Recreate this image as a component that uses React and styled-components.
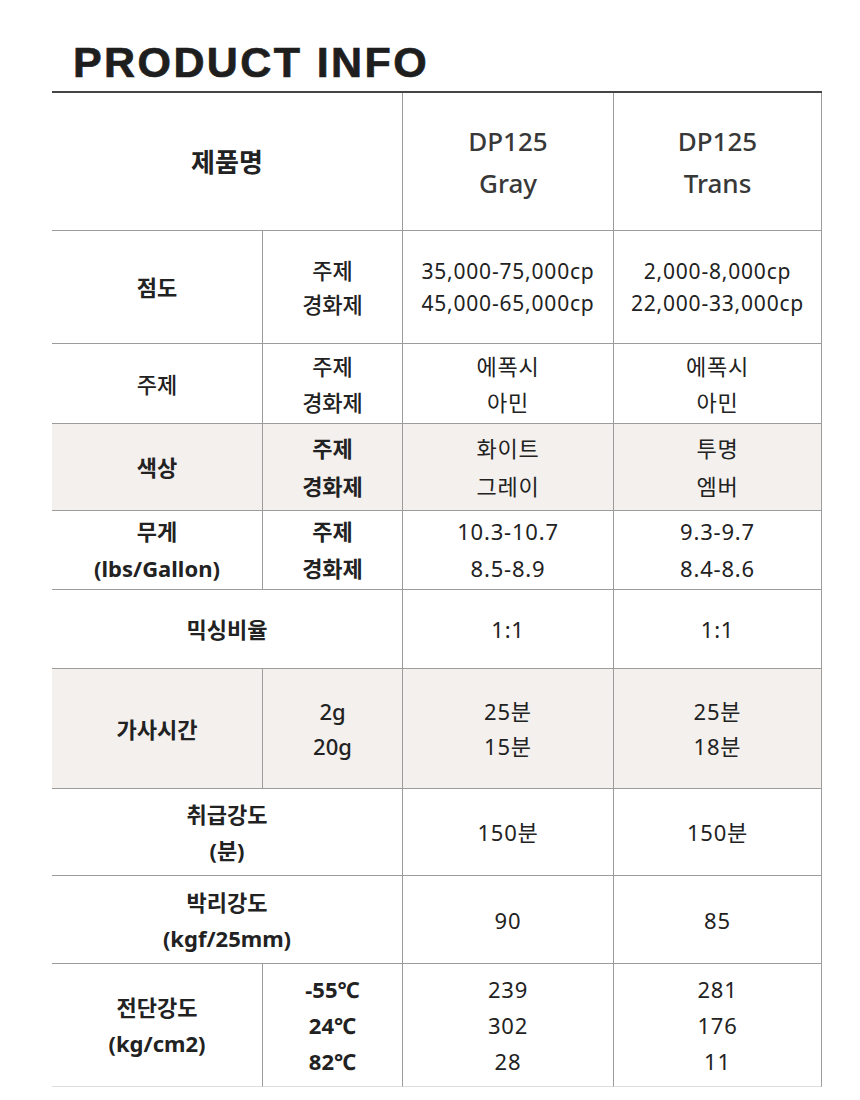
import React from 'react'
import styled, { createGlobalStyle } from 'styled-components'

const GlobalStyle = createGlobalStyle`
  body{
    margin: 0;
    background: #fff;
    font-family: "Noto Sans", "Noto Sans CJK KR", sans-serif;
    color: #222;
  }
`

const Page = styled.main`
  width: 860px;
  padding-top: 41px;
`

const Title = styled.h1`
  margin: 0 0 7px 73px;
  font-family: "Liberation Sans", Arial, sans-serif;
  font-weight: 700;
  font-size: 43px;
  line-height: 43px;
  letter-spacing: 2.4px;
  color: #1e1e1e;
  -webkit-text-stroke: 0.7px #1e1e1e;
`

const Grid = styled.div`
  margin-left: 52px;
  width: 770px;
  border-top: 2px solid #454545;
  display: grid;
  grid-template-columns: 211px 140px 211px 208px;
  grid-template-rows: 138px 113px 80px 87px 79px 79px 120px 87px 88px 123px;
`

const Cell = styled.div`
  box-sizing: border-box;
  grid-column: span ${p => p.$span || 1};
  border-right: 1px solid #9c9c9c;
  border-bottom: 1px solid ${p => (p.$last ? '#dedede' : '#9c9c9c')};
  background: ${p => (p.$shaded ? '#f3f0ee' : '#fff')};
  display: flex;
  flex-direction: column;
  align-items: center;
  justify-content: center;
  text-align: center;
  font-size: ${p => p.$size || 22}px;
  line-height: ${p => p.$lh || 36}px;
  font-weight: ${p => p.$weight || 400};
  letter-spacing: ${p => (p.$weight ? 0 : 0.8)}px;
  color: #222;
`

const HeadCell = styled(Cell)`
  font-size: 26px;
  line-height: 42px;
  letter-spacing: 0;
  font-weight: ${p => p.$weight || 500};
  color: ${p => (p.$weight ? '#222' : '#383838')};
`

const Line = ({ items }) => items.map((t, i) => <span key={i}>{t}</span>)

const App = () => {
  return (
    <Page>
      <GlobalStyle />
      <Title>PRODUCT INFO</Title>
      <Grid>
        {/* header */}
        <HeadCell $span={2} $weight={700}>제품명</HeadCell>
        <HeadCell><Line items={['DP125', 'Gray']} /></HeadCell>
        <HeadCell><Line items={['DP125', 'Trans']} /></HeadCell>

        {/* 점도 */}
        <Cell $weight={700}>점도</Cell>
        <Cell $weight={500} $lh={34}><Line items={['주제', '경화제']} /></Cell>
        <Cell $lh={32} $size={21}><Line items={['35,000-75,000cp', '45,000-65,000cp']} /></Cell>
        <Cell $lh={32} $size={21}><Line items={['2,000-8,000cp', '22,000-33,000cp']} /></Cell>

        {/* 주제 */}
        <Cell $weight={500}>주제</Cell>
        <Cell $weight={500}><Line items={['주제', '경화제']} /></Cell>
        <Cell><Line items={['에폭시', '아민']} /></Cell>
        <Cell><Line items={['에폭시', '아민']} /></Cell>

        {/* 색상 */}
        <Cell $shaded $weight={700}>색상</Cell>
        <Cell $shaded $weight={700} $lh={38}><Line items={['주제', '경화제']} /></Cell>
        <Cell $shaded $lh={38}><Line items={['화이트', '그레이']} /></Cell>
        <Cell $shaded $lh={38}><Line items={['투명', '엠버']} /></Cell>

        {/* 무게 */}
        <Cell $weight={700} $lh={37}><Line items={['무게', '(lbs/Gallon)']} /></Cell>
        <Cell $weight={700} $lh={37}><Line items={['주제', '경화제']} /></Cell>
        <Cell $lh={37}><Line items={['10.3-10.7', '8.5-8.9']} /></Cell>
        <Cell $lh={37}><Line items={['9.3-9.7', '8.4-8.6']} /></Cell>

        {/* 믹싱비율 */}
        <Cell $span={2} $weight={700}>믹싱비율</Cell>
        <Cell>1:1</Cell>
        <Cell>1:1</Cell>

        {/* 가사시간 */}
        <Cell $shaded $weight={700}>가사시간</Cell>
        <Cell $shaded $weight={500} $lh={35}><Line items={['2g', '20g']} /></Cell>
        <Cell $shaded $lh={35}><Line items={['25분', '15분']} /></Cell>
        <Cell $shaded $lh={35}><Line items={['25분', '18분']} /></Cell>

        {/* 취급강도 */}
        <Cell $span={2} $weight={700}><Line items={['취급강도', '(분)']} /></Cell>
        <Cell>150분</Cell>
        <Cell>150분</Cell>

        {/* 박리강도 */}
        <Cell $span={2} $weight={700}><Line items={['박리강도', '(kgf/25mm)']} /></Cell>
        <Cell>90</Cell>
        <Cell>85</Cell>

        {/* 전단강도 */}
        <Cell $last $weight={700}><Line items={['전단강도', '(kg/cm2)']} /></Cell>
        <Cell $last $weight={700}><Line items={['-55℃', '24℃', '82℃']} /></Cell>
        <Cell $last><Line items={['239', '302', '28']} /></Cell>
        <Cell $last><Line items={['281', '176', '11']} /></Cell>
      </Grid>
    </Page>
  )
}

export default App
